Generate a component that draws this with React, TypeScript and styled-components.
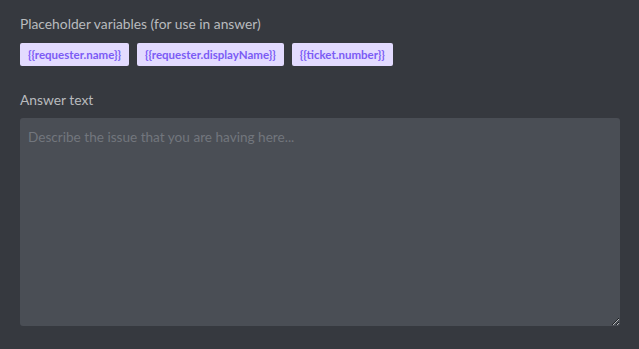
import React from "react";
import styled, { createGlobalStyle } from "styled-components";

const Global = createGlobalStyle`
  html, body { margin: 0; padding: 0; background: #36393f; }
  body { font-family: Lato, "Noto Sans", sans-serif; }
`;

const Page = styled.div`
  width: 639px;
  height: 349px;
  box-sizing: border-box;
  padding: 14px 19px 0 20px;
  display: flex;
  flex-direction: column;
  background: #36393f;
`;

const Label = styled.div`
  color: #b9bbbe;
  font-size: 13.8px;
  line-height: 20px;
`;

const Chips = styled.div`
  display: flex;
  gap: 8px;
  margin-top: 9px;
`;

const Chip = styled.span`
  background: #e3dbff;
  color: #7b5cf5;
  font-size: 11.5px;
  font-weight: 700;
  height: 23px;
  line-height: 23px;
  padding: 0 8px;
  border-radius: 2px;
`;

const Section = styled.div`
  margin-top: 24px;
  display: flex;
  flex-direction: column;
`;

const TextArea = styled.textarea`
  margin-top: 8px;
  width: 600px;
  height: 208px;
  box-sizing: border-box;
  background: #4a4e55;
  border: none;
  border-radius: 3px;
  padding: 9px 8px;
  color: #dcddde;
  font-family: Lato, "Noto Sans", sans-serif;
  font-size: 13.6px;
  line-height: 20px;
  outline: none;
  &::placeholder { color: #72767d; }
`;

export default function App() {
  return (
    <Page>
      <Global />
      <Label>Placeholder variables (for use in answer)</Label>
      <Chips>
        <Chip>{"{{requester.name}}"}</Chip>
        <Chip>{"{{requester.displayName}}"}</Chip>
        <Chip>{"{{ticket.number}}"}</Chip>
      </Chips>
      <Section>
        <Label>Answer text</Label>
        <TextArea placeholder="Describe the issue that you are having here..." />
      </Section>
    </Page>
  );
}
